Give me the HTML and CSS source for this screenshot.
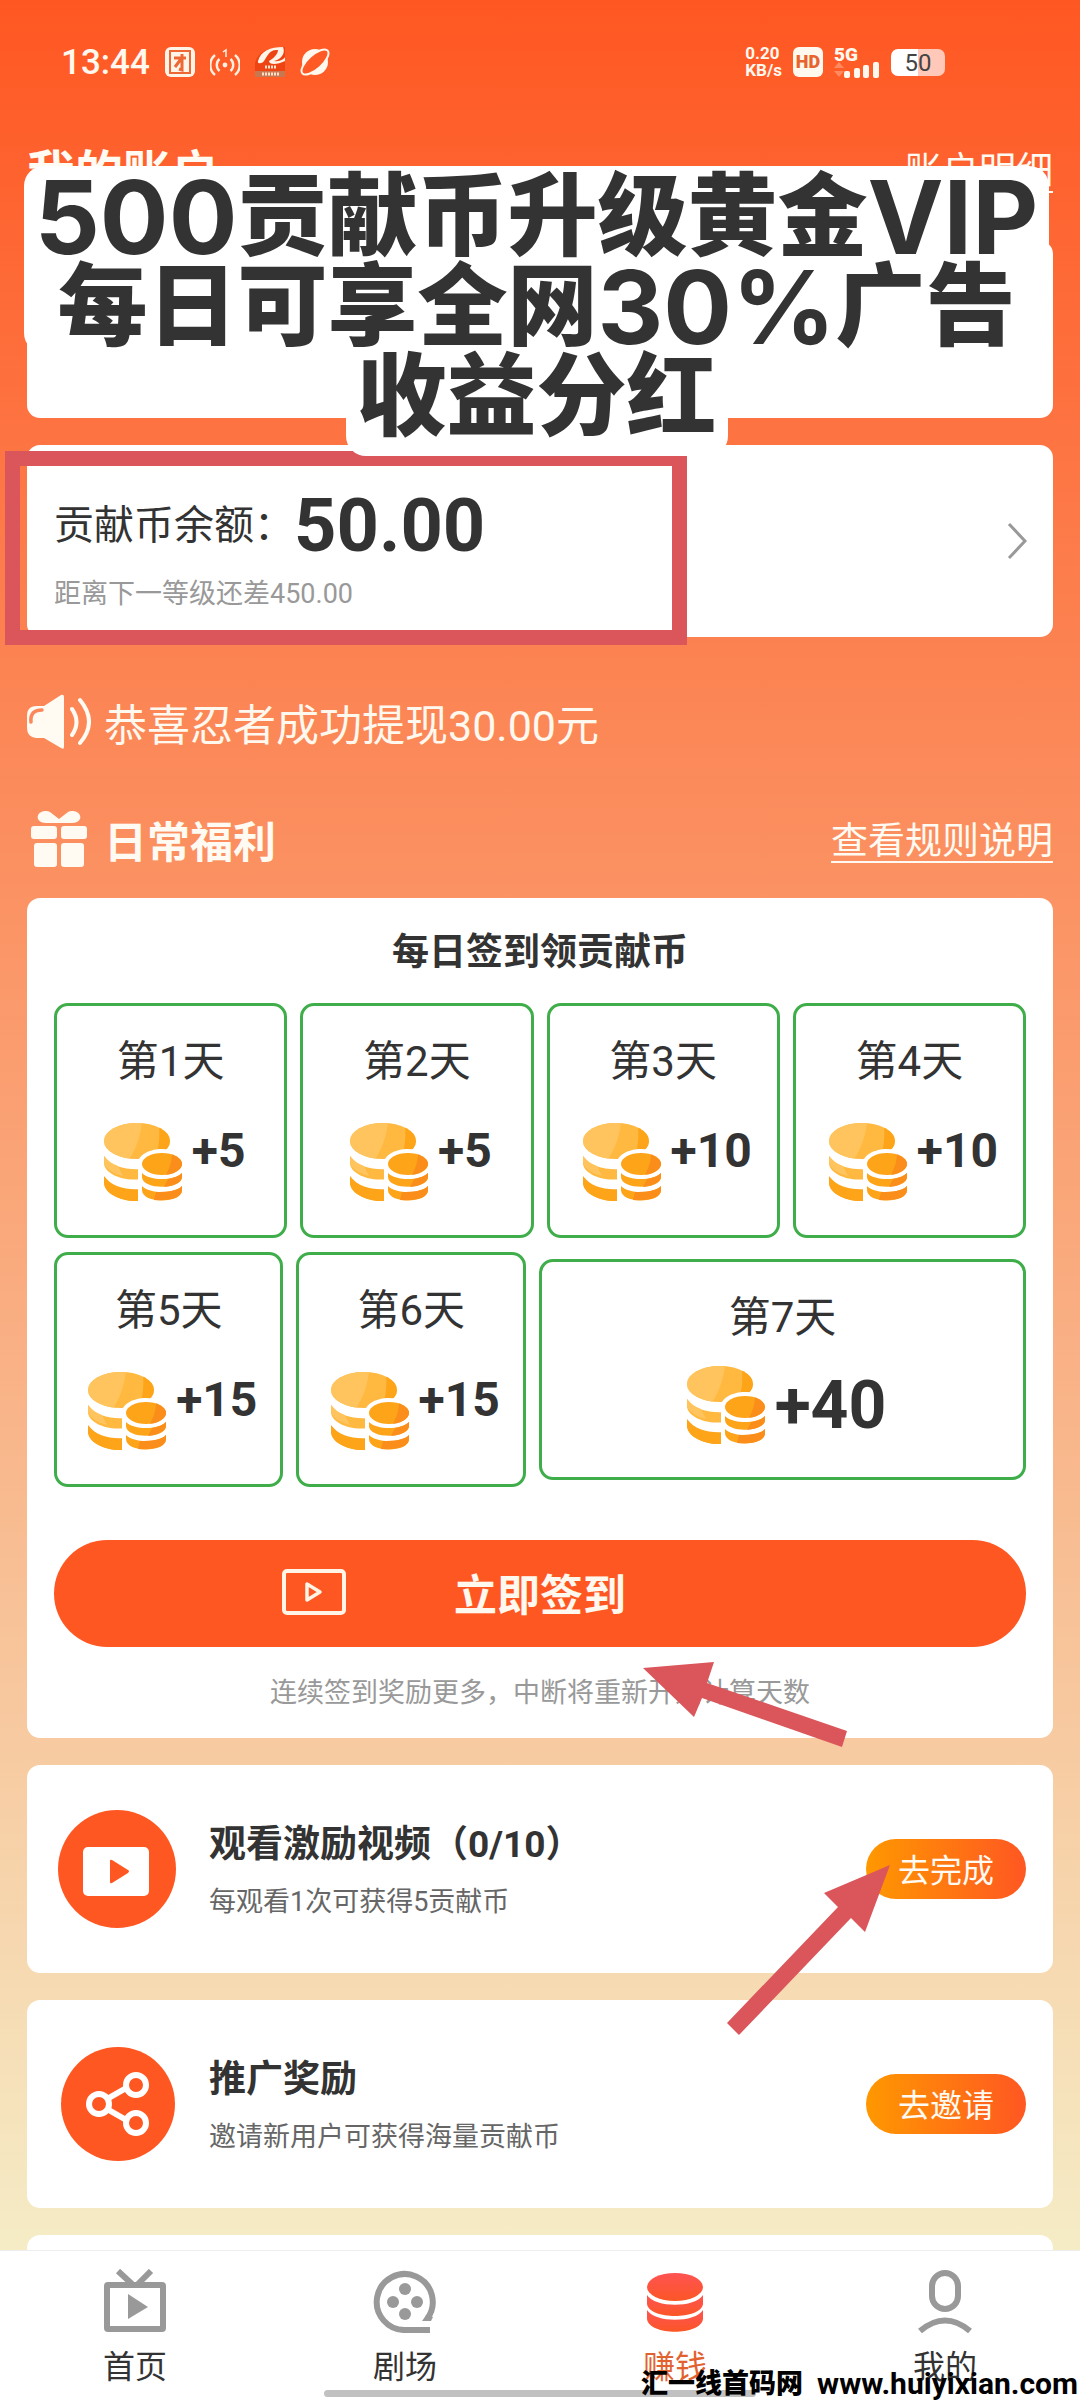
FILE: index.html
```html
<!DOCTYPE html>
<html lang="zh-CN">
<head>
  <meta charset="UTF-8">
  <meta name="viewport" content="width=device-width, initial-scale=1.0">
  <title>赚钱</title>
  <link rel="stylesheet" href="styles.css">
</head>
<body>

  <svg class="defs" width="0" height="0" aria-hidden="true">
    <defs>
      <linearGradient id="red" x1="0" y1="0" x2="0" y2="1">
        <stop offset="0" stop-color="#ff5353"/>
        <stop offset="1" stop-color="#fb5626"/>
      </linearGradient>
      <clipPath id="disc"><ellipse cx="33" cy="18" rx="33" ry="18"/></clipPath>
      <clipPath id="disc-small"><ellipse cx="58" cy="41" rx="20" ry="11"/></clipPath>
    </defs>
    <symbol id="coins" viewBox="0 0 80 80">
      <g fill="#ffb941">
        <path d="M0 58C8 70 22 73 36 73V78C16 79 0 70 0 58z" fill="#fda419"/>
        <path d="M0 53C8 64 22 67 36 66V78C16 79 0 70 0 60z" fill="#fda419"/>
        <path d="M0 33C8 44 22 47 38 46V56C18 59 0 50 0 40z"/>
        <path d="M0 33C4 38 8 41 14 43L19 53C8 50 0 45 0 38z" fill="#ffc45d"/>
      </g>
      <g clip-path="url(#disc)">
        <rect width="66" height="36" fill="#ffb941"/>
        <path d="M0 0H38C36 14 32 26 25 36H0z" fill="#ffc45d"/>
        <path d="M55 0H66V36H51C55 26 56 14 55 0z" fill="#fda419"/>
      </g>
      <path d="M34 80V40C34 32 46 26 58 26S82 32 82 40V80z" fill="#fff"/>
      <g clip-path="url(#disc-small)">
        <rect x="38" y="30" width="40" height="22" fill="#fda419"/>
        <path d="M68 30H78V52H62C66 44 68 38 68 30z" fill="#fb8d1b"/>
      </g>
      <path d="M38 50C46 58 70 58 78 50V54C78 67 38 67 38 54z" fill="#fda419"/>
      <path d="M38 63C46 71 70 71 78 63V67C78 81 38 81 38 67z" fill="#fda419"/>
      <path d="M64 56C70 55 75 53 78 50V54C78 59 70 63 60 64zM52 69C62 69 74 68 78 63V67C78 75 66 78 50 77z" fill="#fb8d1b"/>
    </symbol>
  </svg>

  <main class="page">

    <div class="status">
      <div class="status-side">
        <span class="time">13:44</span>
        <svg width="30" height="30" viewBox="0 0 30 30" fill="none">
          <rect width="30" height="30" rx="6" fill="#fff4e8"/>
          <rect x="5" y="4" width="20" height="22" stroke="#ee6836" stroke-width="2"/>
          <path d="M9 11h12M17 7v16l-3-1M16 12l-6 8" stroke="#ee6836" stroke-width="3"/>
        </svg>
        <svg width="30" height="30" viewBox="0 0 30 30" fill="none" stroke="#fff0e0" stroke-width="2.4">
          <circle cx="15" cy="18" r="2.4" fill="#fff0e0" stroke="none"/>
          <path d="M9.500 12a8 8 0 0 0 0 12M20.500 12a8 8 0 0 1 0 12M5 8a13 13 0 0 0 0 20M25 8a13 13 0 0 1 0 20"/>
          <path d="M13 5l3-2v7" stroke-width="1.500"/>
        </svg>
        <svg width="30" height="30" viewBox="0 0 30 30">
          <path d="M0 16C3 4 14 0 30 0V24H0z" fill="#ee4312"/>
          <rect y="24" width="30" height="6" fill="#c87850"/>
          <path d="M3 14C6 4 15 0 28 0C31 7 25 13 19 14C25 15 29 12 30 10V14C22 18 14 18 14 14C18 12 23 7 23 3C14 2 12 10 9 14C7 17 2 17 3 14z" fill="#fff4e8"/>
          <path d="M10 20h11M7 27h17" stroke="#ffe0c8" stroke-width="3" stroke-dasharray="2 1"/>
        </svg>
        <svg width="30" height="30" viewBox="0 0 30 30">
          <circle cx="15" cy="15" r="13" fill="#fff8ee"/>
          <ellipse cx="15" cy="15" rx="17" ry="7" transform="rotate(-42 15 15)" fill="#ff5a25" stroke="#fff8ee" stroke-width="2"/>
        </svg>
      </div>
      <div class="status-side status-right">
        <span class="speed">0.20<br>KB/s</span>
        <span class="hd">HD</span>
        <div class="signal">
          <span>5G</span>
          <svg width="46" height="16" viewBox="0 0 46 16">
            <path d="M0 6l5-6 5 6zM0 9h10l-5 6z" fill="#ff8a60"/>
            <g fill="#fff8ee">
              <rect x="10" y="9" width="6" height="7" rx="2"/>
              <rect x="20" y="6" width="6" height="10" rx="2"/>
              <rect x="29" y="3" width="6" height="13" rx="2"/>
              <rect x="39" y="0" width="6" height="16" rx="2"/>
            </g>
          </svg>
        </div>
        <span class="battery">50</span>
      </div>
    </div>

    <section class="account">
      <div class="section-head">
        <h2 class="account-title">我的账户</h2>
        <a href="#detail">账户明细</a>
      </div>
      <div class="card account-card"></div>

      <div class="promo">
        <p class="promo-top"><b>500</b>贡献币升级黄金<b>VIP</b><br>每日可享全网<b>30%</b>广告</p>
        <p class="promo-bottom">收益分红</p>
      </div>
    </section>

    <section class="card balance">
      <div>
        <p class="balance-line">贡献币余额：<strong>50.00</strong></p>
        <p class="note">距离下一等级还差450.00</p>
      </div>
      <svg width="20" height="38" viewBox="0 0 20 38" fill="none" stroke="#999" stroke-width="3">
        <path d="M2 2l16 17L2 36"/>
      </svg>
      <div class="mark-box"></div>
    </section>

    <div class="notice">
      <svg width="64" height="56" viewBox="0 0 64 56">
        <path d="M2 15Q4 12 10 12H17L34 1Q37 0 37 3V53Q37 56 34 54L17 44H9Q0 43 0 34V22Q0 17 2 15z" fill="#fffaf2"/>
        <path d="M4 28C3 19 8 16 15 16" stroke="#fc875a" stroke-width="3.500" stroke-linecap="round" fill="none"/>
        <path d="M45 15Q54 28 45 41M53 6Q71 28 53 49" stroke="#fffaf2" stroke-width="4" stroke-linecap="round" fill="none"/>
      </svg>
      <span>恭喜忍者成功提现30.00元</span>
    </div>

    <div class="section-head welfare">
      <h2>
        <svg width="56" height="56" viewBox="0 0 56 56" fill="#fffaf2">
          <path d="M28 8L19 1C13-2 5 2 7 8Q9 12 15 12H41Q47 12 49 8C51 2 43-2 37 1z"/>
          <rect y="15" width="26" height="13" rx="3"/>
          <rect x="30" y="15" width="26" height="13" rx="3"/>
          <rect x="3" y="32" width="23" height="24" rx="3"/>
          <rect x="30" y="32" width="23" height="24" rx="3"/>
        </svg>
        日常福利
      </h2>
      <a href="#rules">查看规则说明</a>
    </div>

    <section class="card checkin">
      <h3>每日签到领贡献币</h3>
      <div class="days">
        <div class="day"><span>第1天</span><div class="reward"><svg class="coins"><use href="#coins"/></svg><b>+5</b></div></div>
        <div class="day"><span>第2天</span><div class="reward"><svg class="coins"><use href="#coins"/></svg><b>+5</b></div></div>
        <div class="day"><span>第3天</span><div class="reward"><svg class="coins"><use href="#coins"/></svg><b>+10</b></div></div>
        <div class="day"><span>第4天</span><div class="reward"><svg class="coins"><use href="#coins"/></svg><b>+10</b></div></div>
      </div>
      <div class="days days-last">
        <div class="day"><span>第5天</span><div class="reward"><svg class="coins"><use href="#coins"/></svg><b>+15</b></div></div>
        <div class="day"><span>第6天</span><div class="reward"><svg class="coins"><use href="#coins"/></svg><b>+15</b></div></div>
        <div class="day day-big"><span>第7天</span><div class="reward"><svg class="coins"><use href="#coins"/></svg><b>+40</b></div></div>
      </div>
      <button class="sign-btn">
        <svg width="64" height="46" viewBox="0 0 64 46" fill="none" stroke="#fff4e6" stroke-width="4">
          <rect x="2" y="2" width="60" height="42" rx="3"/>
          <path d="M25 15v16l13-8z" stroke-width="3.500" stroke-linejoin="round"/>
        </svg>
        <span>立即签到</span>
      </button>
      <p class="note">连续签到奖励更多，中断将重新开始计算天数</p>
      <svg class="arrow arrow-sign" width="206" height="86" viewBox="0 0 206 86">
        <path d="M0 6L71 0L64 21L204 69L199 85L59 36L51 55z" fill="#da565b"/>
      </svg>
    </section>

    <section class="card task">
      <svg width="118" height="118" viewBox="0 0 118 118">
        <circle cx="59" cy="59" r="59" fill="#ff5722"/>
        <rect x="25" y="37" width="66" height="49" rx="5" fill="#fff"/>
        <path d="M52 51Q52 49 54 50L70 60Q72 61 70 63L54 73Q52 74 52 72z" fill="#ff5722"/>
      </svg>
      <div class="task-text">
        <h4>观看激励视频（0/10）</h4>
        <p>每观看1次可获得5贡献币</p>
      </div>
      <button class="go-btn">去完成</button>
      <svg class="arrow arrow-task" width="164" height="171" viewBox="0 0 164 171">
        <path d="M163 0L138 67L124 53L12 170L0 158L111 42L97 28z" fill="#da565b"/>
      </svg>
    </section>

    <section class="card task">
      <svg width="118" height="118" viewBox="0 0 118 118">
        <circle cx="60" cy="59" r="57" fill="#ff5722"/>
        <g fill="none" stroke="#fff" stroke-width="6">
          <path d="M49 54L70 42M49 64L70 76"/>
          <circle cx="41" cy="59" r="10"/>
          <circle cx="78" cy="40" r="10"/>
          <circle cx="78" cy="78" r="10"/>
        </g>
      </svg>
      <div class="task-text">
        <h4>推广奖励</h4>
        <p>邀请新用户可获得海量贡献币</p>
      </div>
      <button class="go-btn">去邀请</button>
    </section>

    <section class="card task"></section>
  </main>

  <nav class="tabbar">
    <a href="#home">
      <svg width="64" height="64" viewBox="0 0 64 64">
        <path d="M15 2L29 15M48 2L35 15" stroke="#999" stroke-width="6"/>
        <rect x="4" y="16" width="56" height="44" rx="1" fill="none" stroke="#999" stroke-width="6"/>
        <path d="M25 25v25l20-12z" fill="#999"/>
      </svg>
      首页
    </a>
    <a href="#theater">
      <svg width="64" height="64" viewBox="0 0 64 64" fill="#999">
        <path d="M57 61H33A28 28 0 1 1 54 50" fill="none" stroke="#999" stroke-width="6"/>
        <path d="M49 52H58L60 48L54 45z"/>
        <circle cx="32" cy="20" r="6"/>
        <circle cx="20" cy="33" r="6"/>
        <circle cx="44" cy="33" r="6"/>
        <circle cx="32" cy="45" r="6"/>
      </svg>
      剧场
    </a>
    <a href="#earn" class="active">
      <svg width="64" height="64" viewBox="0 0 64 64">
        <g fill="url(#red)">
          <path d="M4 41C12 54 52 54 60 41V50C58 67 6 67 4 50z"/>
          <path d="M4 26C12 39 52 39 60 26V35C58 51 6 51 4 35z"/>
          <ellipse cx="32" cy="18" rx="28" ry="14"/>
        </g>
      </svg>
      赚钱
    </a>
    <a href="#me">
      <svg width="64" height="64" viewBox="0 0 64 64" fill="none" stroke="#999" stroke-width="6">
        <rect x="19" y="4" width="26" height="36" rx="13"/>
        <path d="M7 62Q32 41 57 62"/>
      </svg>
      我的
    </a>
    <div class="home-bar"></div>
    <div class="site"><span>汇一线首码网</span><span class="site-url">www.huiyixian.com</span></div>
  </nav>

</body>
</html>
```
FILE: styles.css
```css
* {
  box-sizing: border-box;
}

body {
  margin: 0;
  height: 100vh;
  display: flex;
  flex-direction: column;
  font-family: Roboto, "Noto Sans CJK SC", sans-serif;
  color: #333;
}

h2, h3, h4, p {
  margin: 0;
}

button {
  border: none;
  padding: 0;
  font-family: inherit;
  cursor: pointer;
}

svg {
  display: block;
  flex-shrink: 0;
}

.defs {
  position: absolute;
}

.page {
  flex: 1;
  min-height: 0;
  overflow: hidden;
  padding: 0 27px;
  background: linear-gradient(#ff5722, #f5ecc6);
}

/* status bar */
.status {
  height: 124px;
  padding: 0 108px 0 34px;
  display: flex;
  align-items: center;
  justify-content: space-between;
  color: #fff8ee;
}

.status-side {
  display: flex;
  align-items: center;
  gap: 15px;
}

.status-right {
  gap: 11px;
}

.time {
  font-size: 35px;
  font-weight: 500;
}

.speed {
  font-size: 17px;
  line-height: 17px;
  font-weight: 700;
}

.hd {
  width: 30px;
  height: 30px;
  border-radius: 6px;
  background: #fff8ee;
  color: #e8642f;
  font-size: 18px;
  line-height: 30px;
  font-weight: 900;
  text-align: center;
}

.signal {
  font-size: 19px;
  line-height: 15px;
  font-weight: 900;
}

.battery {
  width: 54px;
  height: 27px;
  border-radius: 7px;
  background: linear-gradient(90deg, #fff 50%, #ffc8b8 50%);
  color: #444;
  font-size: 24px;
  line-height: 28px;
  text-align: center;
}

/* shared */
.card {
  background: #fff;
  border-radius: 13px;
  margin-bottom: 27px;
}

.section-head {
  display: flex;
  align-items: center;
  justify-content: space-between;
  color: #fffaf2;
}

.section-head a {
  padding-top: 8px;
  font-size: 37px;
  line-height: 38px;
  color: inherit;
  text-decoration: none;
  border-bottom: 2px solid;
}

.note {
  font-size: 27px;
  line-height: 36px;
  color: #999;
}

/* account */
.account {
  position: relative;
}

.account .section-head {
  height: 90px;
  margin-bottom: 27px;
}

.account-title {
  font-size: 48px;
}

.account-card {
  height: 177px;
}

.promo {
  position: absolute;
  z-index: 2;
  top: 42px;
  left: -3px;
  right: 4px;
  font-size: 90px;
  line-height: 90px;
  font-weight: 900;
  text-align: center;
  white-space: nowrap;
}

.promo b {
  font-family: Inter, sans-serif;
  font-size: 102px;
  line-height: 0;
  font-weight: 700;
  vertical-align: -6px;
}

.promo-top {
  background: #fff;
  border-radius: 20px;
  padding-top: 7px;
}

.promo-bottom {
  width: 382px;
  margin: 0 auto;
  background: #fff;
  border-radius: 20px;
  padding-bottom: 13px;
}

/* balance */
.balance {
  position: relative;
  height: 192px;
  padding: 14px 26px 0 27px;
  display: flex;
  align-items: center;
  justify-content: space-between;
}

.balance > svg {
  margin-bottom: 14px;
}

.balance-line {
  display: flex;
  align-items: center;
  font-size: 40px;
  line-height: 84px;
  margin-bottom: 8px;
}

.balance-line strong {
  font-size: 74px;
}

.mark-box {
  position: absolute;
  top: 6px;
  left: -22px;
  width: 682px;
  height: 194px;
  border: 15px solid #da565b;
}

/* notice */
.notice {
  height: 116px;
  display: flex;
  align-items: center;
  gap: 13px;
  font-size: 43px;
  color: #fff8ee;
}

.welfare {
  height: 118px;
}

.welfare h2 {
  display: flex;
  align-items: center;
  gap: 17px;
  padding-left: 4px;
  font-size: 43px;
}

/* checkin */
.checkin {
  position: relative;
  padding: 30px 27px 27px;
  text-align: center;
}

.checkin h3 {
  font-size: 37px;
  line-height: 50px;
  margin-bottom: 25px;
}

.days {
  display: grid;
  grid-template-columns: repeat(4, 1fr);
  gap: 13px;
  margin-bottom: 14px;
}

.days-last {
  grid-template-columns: 229fr 229fr 486fr;
  align-items: center;
  margin-bottom: 53px;
}

.day {
  height: 235px;
  border: 3px solid #3fae4a;
  border-radius: 14px;
  padding-top: 31px;
  font-size: 42px;
  line-height: 50px;
}

.reward {
  display: flex;
  justify-content: center;
  gap: 8px;
  margin-top: 36px;
  padding-left: 8px;
}

.reward b {
  font-size: 48px;
  line-height: 56px;
}

.coins {
  width: 80px;
  height: 80px;
}

.day-big {
  height: 221px;
}

.day-big .reward {
  margin-top: 23px;
}

.day-big .reward b {
  font-size: 66px;
  line-height: 80px;
}

.sign-btn {
  display: grid;
  grid-template-columns: 1fr auto 1fr;
  align-items: center;
  gap: 108px;
  width: 100%;
  height: 107px;
  border-radius: 54px;
  padding-bottom: 3px;
  background: #ff5722;
  color: #fff8ee;
  font-size: 43px;
  font-weight: 700;
}

.sign-btn svg {
  justify-self: end;
}

.checkin .note {
  margin-top: 28px;
}

.arrow {
  position: absolute;
  z-index: 3;
}

.arrow-sign {
  right: 204px;
  bottom: -10px;
}

/* tasks */
.task {
  position: relative;
  height: 208px;
  padding: 0 27px 0 31px;
  display: flex;
  align-items: center;
}

.task-text {
  flex: 1;
  padding-left: 33px;
}

.task h4 {
  font-size: 37px;
  line-height: 54px;
  margin-bottom: 12px;
}

.task p {
  font-size: 27px;
  line-height: 36px;
  color: #666;
}

.go-btn {
  width: 160px;
  height: 60px;
  border-radius: 30px;
  padding-bottom: 3px;
  background: linear-gradient(90deg, #ff9800, #ff5722);
  color: #fffaf2;
  font-size: 32px;
}

.arrow-task {
  right: 162px;
  top: 100px;
}

/* tab bar */
.tabbar {
  position: relative;
  height: 150px;
  display: flex;
  border-top: 1px solid #eee;
  background: #fff;
}

.tabbar a {
  flex: 1;
  display: flex;
  flex-direction: column;
  align-items: center;
  gap: 11px;
  padding-top: 18px;
  font-size: 32px;
  line-height: 46px;
  color: #333;
  text-decoration: none;
}

.tabbar .active {
  color: #e2622f;
}

.home-bar {
  position: absolute;
  left: 30%;
  right: 30%;
  bottom: 3px;
  height: 7px;
  border-radius: 4px;
  background: #c1c1c1;
}

.site {
  position: absolute;
  right: 2px;
  bottom: 0;
  display: flex;
  gap: 14px;
  font-size: 27px;
  line-height: 32px;
  font-weight: 900;
  color: #000;
}

.site-url {
  font-size: 30px;
  font-weight: 700;
}
```
